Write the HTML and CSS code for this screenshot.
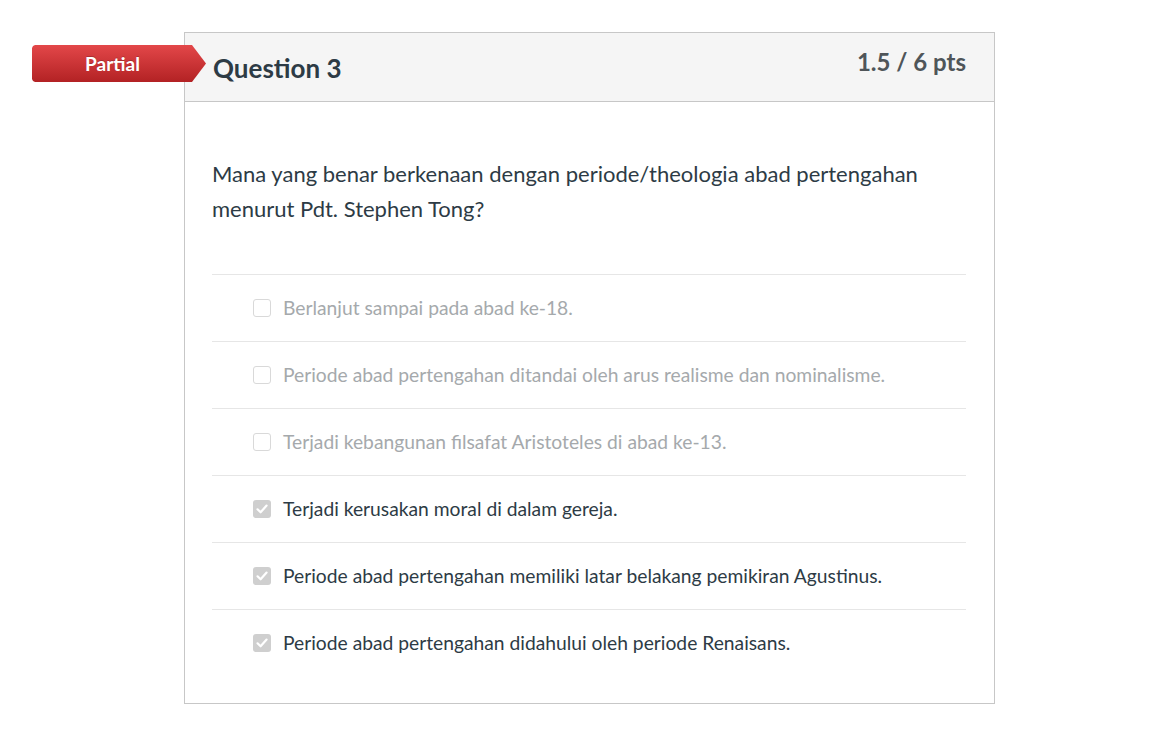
FILE: index.html
```html
<!DOCTYPE html>
<html lang="id">
<head>
<meta charset="utf-8">
<title>Question 3</title>
<link rel="stylesheet" href="styles.css">
</head>
<body>
<div class="page">
  <div class="question">
    <div class="badge">Partial</div>
    <div class="q-header">
      <h2 class="q-title">Question 3</h2>
      <div class="q-points">1.5 / 6 pts</div>
    </div>
    <div class="q-body">
      <p class="q-text">Mana yang benar berkenaan dengan periode/theologia abad pertengahan menurut Pdt. Stephen Tong?</p>
      <div class="answers">
        <div class="answer muted"><span class="box"></span><span class="label">Berlanjut sampai pada abad ke-18.</span></div>
        <div class="answer muted"><span class="box"></span><span class="label">Periode abad pertengahan ditandai oleh arus realisme dan nominalisme.</span></div>
        <div class="answer muted"><span class="box"></span><span class="label">Terjadi kebangunan filsafat Aristoteles di abad ke-13.</span></div>
        <div class="answer"><span class="box checked"><svg viewBox="0 0 18 18" width="18" height="18"><path d="M4.5 9.3 L7.6 12.3 L13.6 5.6" fill="none" stroke="#fff" stroke-width="2.2" stroke-linecap="round" stroke-linejoin="round"/></svg></span><span class="label">Terjadi kerusakan moral di dalam gereja.</span></div>
        <div class="answer"><span class="box checked"><svg viewBox="0 0 18 18" width="18" height="18"><path d="M4.5 9.3 L7.6 12.3 L13.6 5.6" fill="none" stroke="#fff" stroke-width="2.2" stroke-linecap="round" stroke-linejoin="round"/></svg></span><span class="label">Periode abad pertengahan memiliki latar belakang pemikiran Agustinus.</span></div>
        <div class="answer"><span class="box checked"><svg viewBox="0 0 18 18" width="18" height="18"><path d="M4.5 9.3 L7.6 12.3 L13.6 5.6" fill="none" stroke="#fff" stroke-width="2.2" stroke-linecap="round" stroke-linejoin="round"/></svg></span><span class="label">Periode abad pertengahan didahului oleh periode Renaisans.</span></div>
      </div>
    </div>
  </div>
</div>
</body>
</html>
```

FILE: styles.css
```css
* { box-sizing: border-box; }
html, body { margin: 0; padding: 0; background: #fff; }
body { font-family: Lato, "Open Sans", Arial, sans-serif; color: #2d3b45; }

.page { padding: 32px 0 0 184px; }

.question {
  position: relative;
  width: 811px;
  height: 672px;
  border: 1px solid #c7c7c7;
  background: #fff;
}

.badge {
  position: absolute;
  left: -153px;
  top: 12px;
  width: 174px;
  height: 37px;
  padding-right: 13px;
  padding-bottom: 1px;
  display: flex;
  align-items: center;
  justify-content: center;
  color: #fff;
  font-weight: 700;
  font-size: 19px;
  background: linear-gradient(#e34749, #b32224);
  clip-path: polygon(0 3px, 1px 1px, 3px 0, 160px 0, 174px 18.5px, 160px 37px, 3px 37px, 1px 36px, 0 34px);
  text-shadow: 0 -1px 0 rgba(0,0,0,0.2);
}

.q-header {
  height: 69px;
  background: #f5f5f5;
  border-bottom: 1px solid #c7c7c7;
  display: flex;
  justify-content: space-between;
  align-items: flex-start;
  padding: 0 28px 0 28px;
}

.q-title {
  margin: 18px 0 0 0;
  font-size: 26px;
  font-weight: 700;
  line-height: 34px;
  color: #2d3b45;
}

.q-points {
  margin-top: 14px;
  font-size: 24px;
  font-weight: 700;
  line-height: 30px;
  color: #4f5559;
}

.q-body { padding: 0 28px 0 27px; }

.q-text {
  margin: 54px 0 48px 0;
  font-size: 22px;
  line-height: 35px;
  color: #2d3b45;
}

.answer {
  height: 67px;
  border-top: 1px solid #e6e6e6;
  display: flex;
  align-items: center;
  padding-left: 41px;
  padding-bottom: 1px;
  font-size: 19.25px;
  color: #2d3b45;
}
.answer.muted { color: #a5a9ac; }

.box {
  width: 18px;
  height: 18px;
  flex: none;
  border: 1px solid #d9d9d9;
  border-radius: 3px;
  background: #fff;
  margin-right: 12px;
  display: flex;
}
.box.checked {
  border: none;
  background: #cfcfcf;
}
.box svg { display: block; }
```
